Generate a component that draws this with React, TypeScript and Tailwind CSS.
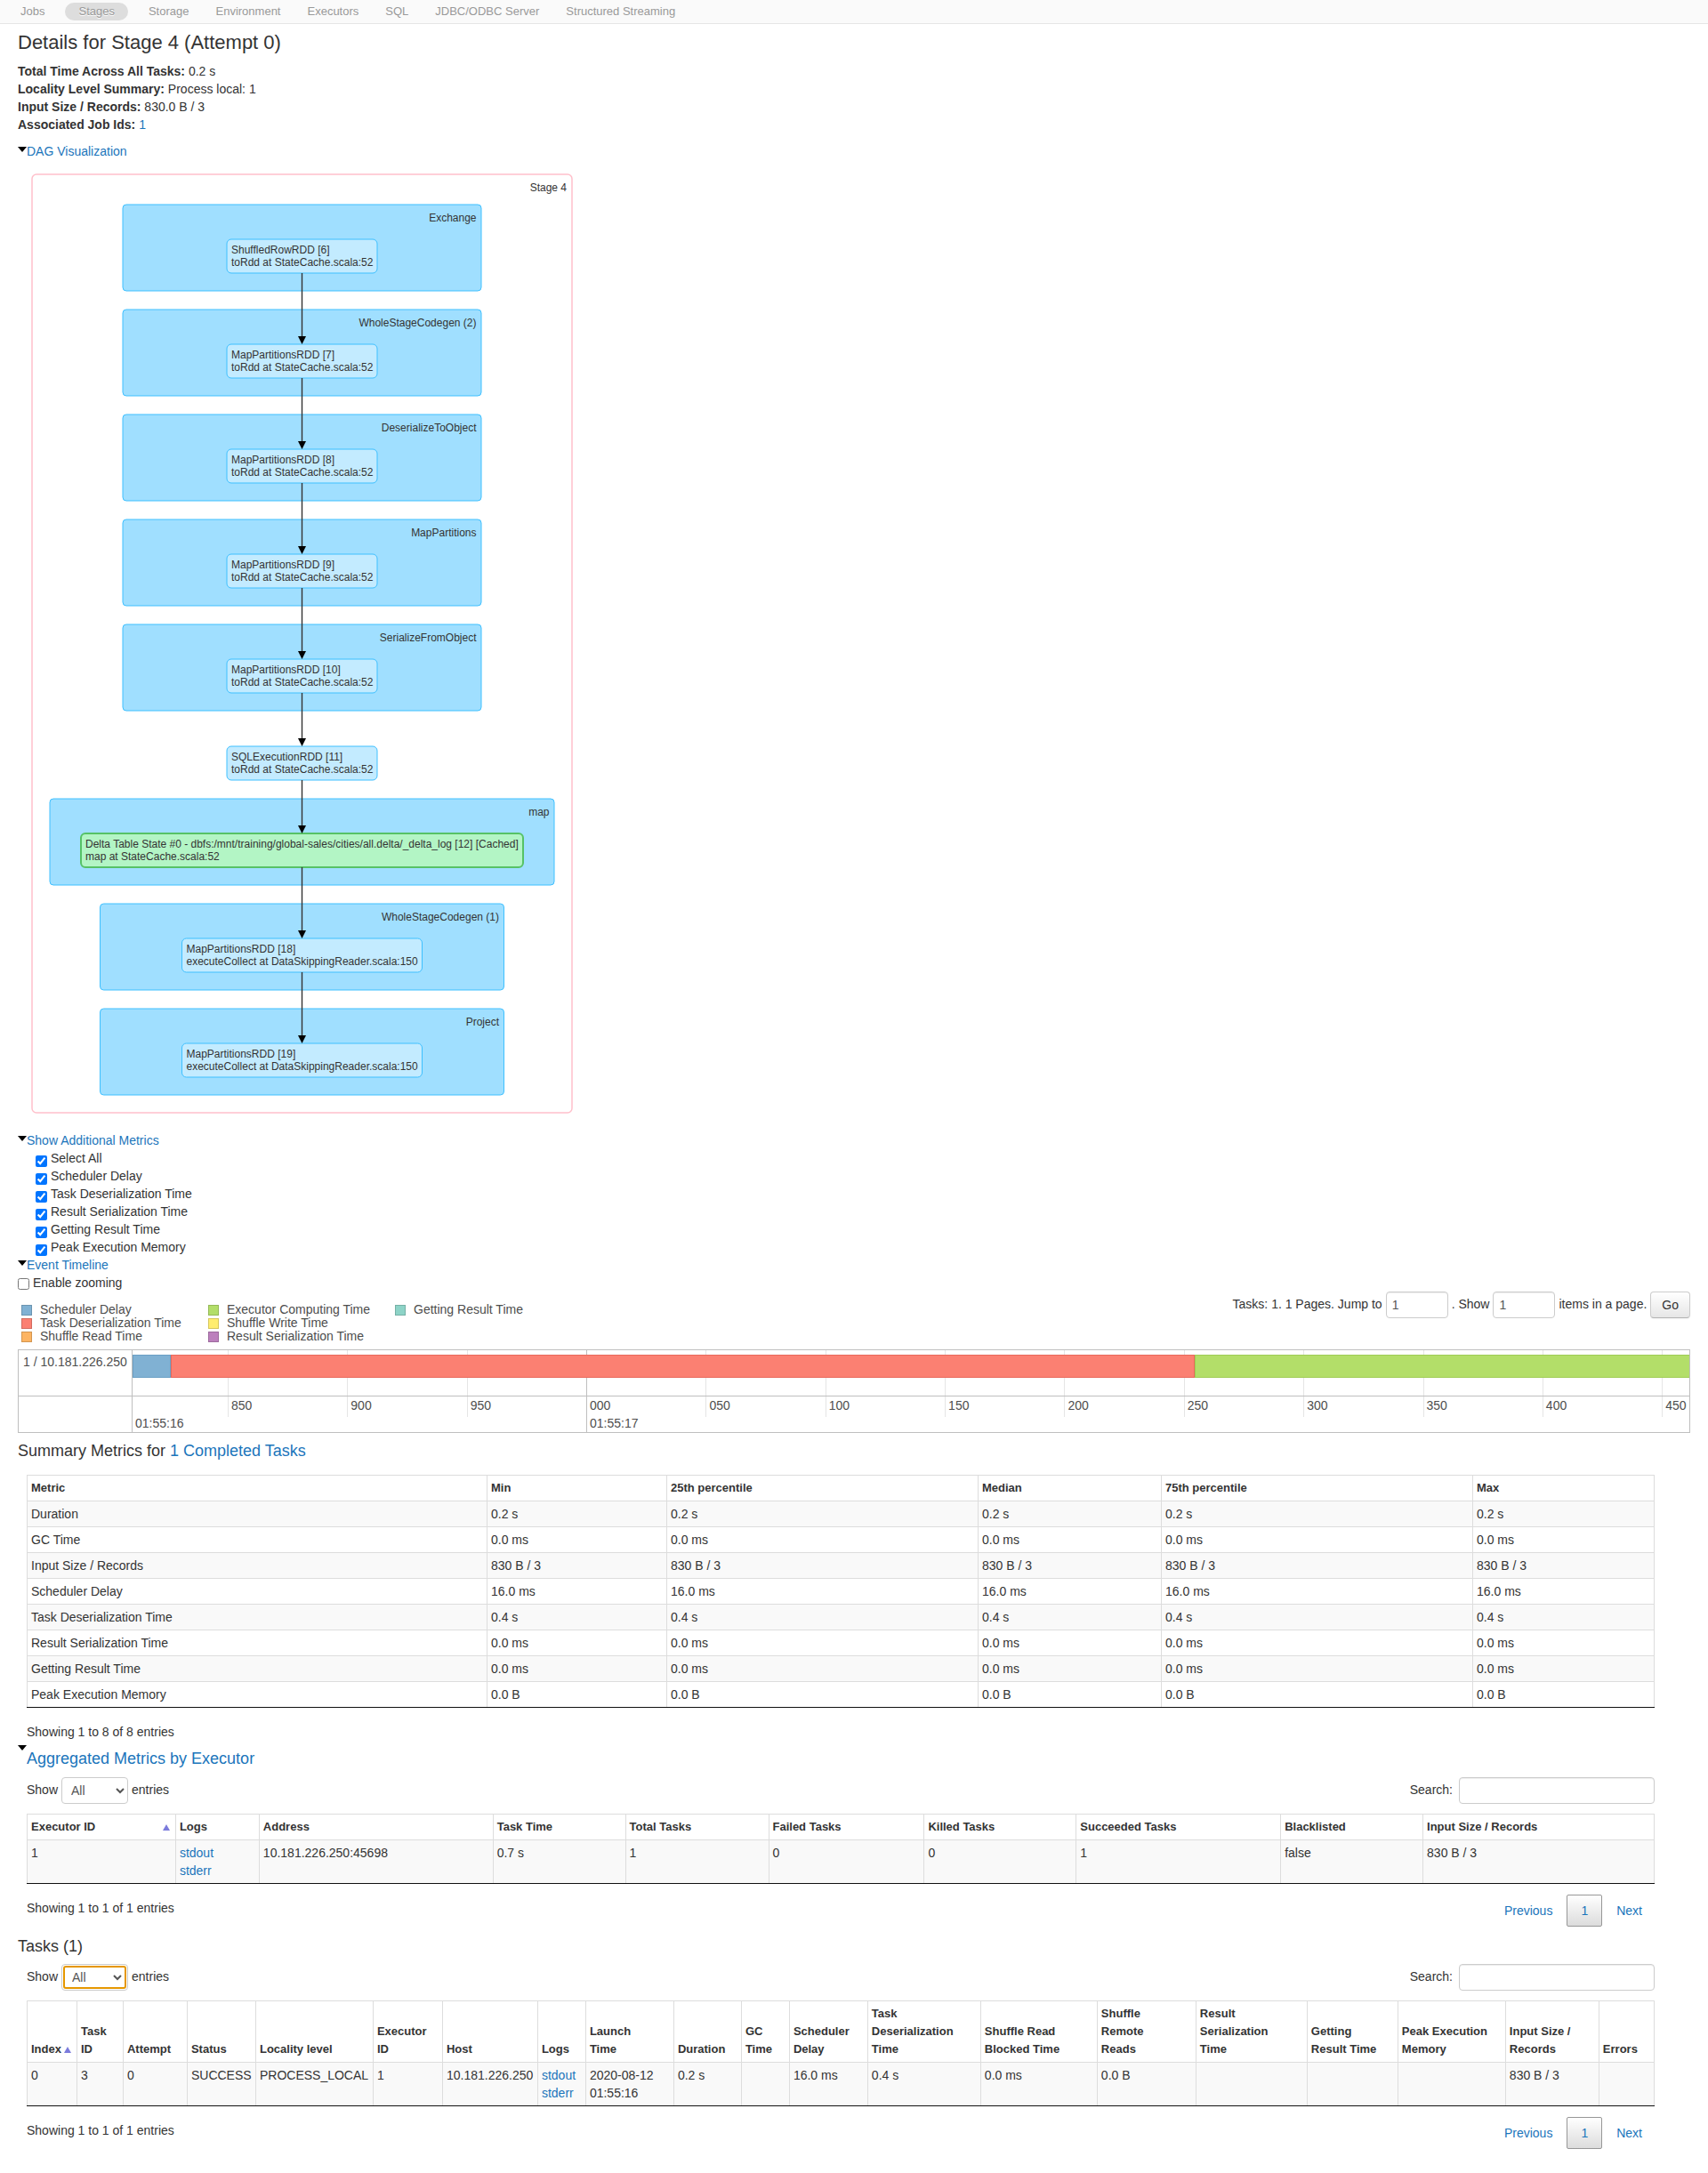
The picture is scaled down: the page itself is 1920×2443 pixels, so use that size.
import React from "react";

const tabs = ["Jobs", "Stages", "Storage", "Environment", "Executors", "SQL", "JDBC/ODBC Server", "Structured Streaming"];

const facts: { label: string; value: string; link?: boolean }[] = [
  { label: "Total Time Across All Tasks:", value: "0.2 s" },
  { label: "Locality Level Summary:", value: "Process local: 1" },
  { label: "Input Size / Records:", value: "830.0 B / 3" },
  { label: "Associated Job Ids:", value: "1", link: true },
];

const metricOptions = [
  "Select All",
  "Scheduler Delay",
  "Task Deserialization Time",
  "Result Serialization Time",
  "Getting Result Time",
  "Peak Execution Memory",
];

const link = "text-[#1b75bb] hover:underline";

function Caret() {
  return (
    <svg width="10" height="6" viewBox="0 0 10 6" className="block shrink-0" aria-hidden="true">
      <path d="M0 0H10L5 6Z" fill="#000" />
    </svg>
  );
}

function Toggle({ children }: { children: React.ReactNode }) {
  return (
    <button type="button" className="flex items-start leading-5 text-[#1b75bb]">
      <span className="mt-[5px]"><Caret /></span>
      {children}
    </button>
  );
}

/* ---------- DAG ---------- */

type Cluster = { name: string; x: number; right: number; y: number };
type Node = { title: string; site: string; x: number; right: number; y: number; cached?: boolean };

const clusters: Cluster[] = [
  { name: "Exchange", x: 138, right: 541, y: 230 },
  { name: "WholeStageCodegen (2)", x: 138, right: 541, y: 348 },
  { name: "DeserializeToObject", x: 138, right: 541, y: 466 },
  { name: "MapPartitions", x: 138, right: 541, y: 584 },
  { name: "SerializeFromObject", x: 138, right: 541, y: 702 },
  { name: "map", x: 56, right: 623, y: 898 },
  { name: "WholeStageCodegen (1)", x: 112.5, right: 566.5, y: 1016 },
  { name: "Project", x: 112.5, right: 566.5, y: 1134 },
];

const rdd = "toRdd at StateCache.scala:52";
const collect = "executeCollect at DataSkippingReader.scala:150";

const nodes: Node[] = [
  { title: "ShuffledRowRDD [6]", site: rdd, x: 255, right: 424, y: 269 },
  { title: "MapPartitionsRDD [7]", site: rdd, x: 255, right: 424, y: 387 },
  { title: "MapPartitionsRDD [8]", site: rdd, x: 255, right: 424, y: 505 },
  { title: "MapPartitionsRDD [9]", site: rdd, x: 255, right: 424, y: 623 },
  { title: "MapPartitionsRDD [10]", site: rdd, x: 255, right: 424, y: 741 },
  { title: "SQLExecutionRDD [11]", site: rdd, x: 255, right: 424, y: 839 },
  {
    title: "Delta Table State #0 - dbfs:/mnt/training/global-sales/cities/all.delta/_delta_log [12] [Cached]",
    site: "map at StateCache.scala:52",
    x: 91,
    right: 588,
    y: 937,
    cached: true,
  },
  { title: "MapPartitionsRDD [18]", site: collect, x: 204.5, right: 474.5, y: 1055 },
  { title: "MapPartitionsRDD [19]", site: collect, x: 204.5, right: 474.5, y: 1173 },
];

function Dag() {
  return (
    <svg width="640" height="1092" viewBox="20 180 640 1092" className="block text-xs" role="img" aria-label="DAG of stage 4">
      <rect x="36" y="196" width="607" height="1055" rx="5" fill="#fff" stroke="#ffc0cb" strokeWidth="1.5" />
      <text x="637" y="215" textAnchor="end" fill="#333">Stage 4</text>
      {clusters.map((c) => (
        <g key={c.name}>
          <rect x={c.x} y={c.y} width={c.right - c.x} height="97" rx="4" fill="#a0dfff" stroke="#3ec0ff" />
          <text x={c.right - 5.5} y={c.y + 19} textAnchor="end" fill="#333">{c.name}</text>
        </g>
      ))}
      {nodes.map((n) => (
        <g key={n.title}>
          <rect
            x={n.x}
            y={n.y}
            width={n.right - n.x}
            height="38"
            rx="5"
            fill={n.cached ? "#b3f5c5" : "#c3ebff"}
            stroke={n.cached ? "#56c266" : "#3ec0ff"}
            strokeWidth={n.cached ? 2 : 1}
          />
          <text x={n.x + 5} y={n.y + 16} fill="#333">{n.title}</text>
          <text x={n.x + 5} y={n.y + 30} fill="#333">{n.site}</text>
        </g>
      ))}
      {nodes.slice(1).map((n, i) => (
        <g key={n.title}>
          <path d={`M339.5 ${nodes[i].y + 38}V${n.y - 4}`} stroke="#333" strokeWidth="1.4" />
          <path d={`M335 ${n.y - 9}H344L339.5 ${n.y}Z`} fill="#000" />
        </g>
      ))}
    </svg>
  );
}

/* ---------- Event timeline ---------- */

const legend = [
  { name: "Scheduler Delay", color: "bg-[#80b1d3] border-[#6b94b0]" },
  { name: "Task Deserialization Time", color: "bg-[#fb8072] border-[#d26b5f]" },
  { name: "Shuffle Read Time", color: "bg-[#fdb462] border-[#d39651]" },
  { name: "Executor Computing Time", color: "bg-[#b3de69] border-[#95b957]" },
  { name: "Shuffle Write Time", color: "bg-[#ffed6f] border-[#d5c65c]" },
  { name: "Result Serialization Time", color: "bg-[#bc80bd] border-[#9d6b9e]" },
  { name: "Getting Result Time", color: "bg-[#8dd3c7] border-[#75b0a6]" },
];

const ticks = ["850", "900", "950", "000", "050", "100", "150", "200", "250", "300", "350", "400", "450"].map((label, i) => ({
  label,
  left: `${(((107 + i * 134.35) / 1750) * 100).toFixed(3)}%`,
  major: label === "000",
}));

function Timeline() {
  return (
    <div className="flex border border-[#bfbfbf] text-[#4d4d4d]">
      <div className="w-32 shrink-0 border-r border-[#bfbfbf]">
        <div className="h-[52px] border-b border-[#bfbfbf] px-[5px] pt-[3px] leading-5">1 / 10.181.226.250</div>
      </div>
      <div className="relative h-[92px] flex-1 overflow-hidden">
        {ticks.map((t) => (
          <div
            key={t.label}
            style={{ left: t.left }}
            className={
              t.major
                ? "absolute top-0 h-full border-l border-[#bfbfbf] pl-[3px] pt-[52px] leading-5"
                : "absolute top-0 h-[75px] border-l border-[#e5e5e5] pl-[3px] pt-[52px] leading-5"
            }
          >
            {t.label}
            {t.major && <div>01:55:17</div>}
          </div>
        ))}
        <div className="relative h-[52px] border-b border-[#bfbfbf] pt-[5px]">
          <div className="grid h-[26px] grid-cols-[43fr_1151fr_556fr]">
            <div className="border border-[#6b9fc4] bg-[#80b1d3]" />
            <div className="border border-[#e8695b] bg-[#fb8072]" />
            <div className="border-y border-l border-[#9fcc55] bg-[#b3de69]" />
          </div>
        </div>
        <div className="pl-[3px] pt-5 leading-5">01:55:16</div>
      </div>
    </div>
  );
}

const field =
  "h-[30px] rounded border border-[#ccc] bg-white px-1.5 text-sm text-[#555] shadow-[inset_0_1px_1px_rgba(0,0,0,0.075)]";

function TaskPager() {
  return (
    <form className="flex items-center leading-5" onSubmit={(e) => e.preventDefault()}>
      <label htmlFor="jump" className="pb-0.5">Tasks: 1. 1 Pages. Jump to</label>
      <input id="jump" defaultValue="1" className={`${field} ml-1 w-[70px]`} />
      <label htmlFor="per-page" className="ml-1 pb-0.5">. Show</label>
      <input id="per-page" defaultValue="1" aria-describedby="per-page-unit" className={`${field} ml-1 w-[70px]`} />
      <span id="per-page-unit" className="ml-1 pb-0.5">items in a page.</span>
      <button
        type="submit"
        className="ml-1 h-[30px] rounded border border-[#ccc] border-b-[#b3b3b3] bg-linear-to-b from-white to-[#e6e6e6] px-3 text-[#333] shadow-[0_1px_2px_rgba(0,0,0,0.05)]"
      >
        Go
      </button>
    </form>
  );
}

/* ---------- Tables ---------- */

type Column = { head: string; width: number; sorted?: boolean };

function DataTable({ columns, rows, label }: { columns: Column[]; rows: React.ReactNode[][]; label: string }) {
  const total = columns.reduce((sum, c) => sum + c.width, 0);
  return (
    <div className="border-b border-[#111]">
      <table
        aria-label={label}
        className="w-full table-fixed border-separate border-spacing-0 border-r border-[#ddd] leading-5"
      >
        <colgroup>
          {columns.map((c) => (
            <col key={c.head} style={{ width: `${(c.width / total) * 100}%` }} />
          ))}
        </colgroup>
        <thead>
          <tr>
            {columns.map((c) => (
              <th
                key={c.head}
                scope="col"
                className="whitespace-pre-line border-l border-t border-[#ddd] p-1 text-left align-bottom text-[13px] font-bold leading-5"
              >
                {c.sorted ? (
                  <span className="flex items-end justify-between">
                    {c.head}
                    <svg width="8" height="7" viewBox="0 0 8 7" className="mb-1.5 mr-0.5 shrink-0" aria-hidden="true">
                      <path d="M4 0L8 7H0Z" fill="#7b7bdc" />
                    </svg>
                  </span>
                ) : (
                  c.head
                )}
              </th>
            ))}
          </tr>
        </thead>
        <tbody>
          {rows.map((r, i) => (
            <tr key={i} className="odd:bg-[#f9f9f9]">
              {r.map((cell, j) => (
                <td key={j} className="border-l border-t border-[#ddd] p-1 align-top">{cell}</td>
              ))}
            </tr>
          ))}
        </tbody>
      </table>
    </div>
  );
}

const logs = (
  <>
    <a href="#stdout" className={`block ${link}`}>stdout</a>
    <a href="#stderr" className={`block ${link}`}>stderr</a>
  </>
);

const summaryColumns: Column[] = [
  { head: "Metric", width: 517 },
  { head: "Min", width: 202 },
  { head: "25th percentile", width: 350 },
  { head: "Median", width: 206 },
  { head: "75th percentile", width: 350 },
  { head: "Max", width: 204 },
];

const summaryRows = [
  ["Duration", "0.2 s"],
  ["GC Time", "0.0 ms"],
  ["Input Size / Records", "830 B / 3"],
  ["Scheduler Delay", "16.0 ms"],
  ["Task Deserialization Time", "0.4 s"],
  ["Result Serialization Time", "0.0 ms"],
  ["Getting Result Time", "0.0 ms"],
  ["Peak Execution Memory", "0.0 B"],
].map(([name, v]) => [name, v, v, v, v, v]);

const executorColumns: Column[] = [
  { head: "Executor ID", width: 167, sorted: true },
  { head: "Logs", width: 94 },
  { head: "Address", width: 263 },
  { head: "Task Time", width: 149 },
  { head: "Total Tasks", width: 161 },
  { head: "Failed Tasks", width: 175 },
  { head: "Killed Tasks", width: 171 },
  { head: "Succeeded Tasks", width: 230 },
  { head: "Blacklisted", width: 160 },
  { head: "Input Size / Records", width: 260 },
];

const executorRows = [["1", logs, "10.181.226.250:45698", "0.7 s", "1", "0", "0", "1", "false", "830 B / 3"]];

const taskColumns: Column[] = [
  { head: "Index", width: 56, sorted: true },
  { head: "Task\nID", width: 52 },
  { head: "Attempt", width: 72 },
  { head: "Status", width: 77 },
  { head: "Locality level", width: 132 },
  { head: "Executor\nID", width: 78 },
  { head: "Host", width: 107 },
  { head: "Logs", width: 54 },
  { head: "Launch\nTime", width: 99 },
  { head: "Duration", width: 76 },
  { head: "GC\nTime", width: 54 },
  { head: "Scheduler\nDelay", width: 88 },
  { head: "Task\nDeserialization\nTime", width: 127 },
  { head: "Shuffle Read\nBlocked Time", width: 131 },
  { head: "Shuffle\nRemote\nReads", width: 111 },
  { head: "Result\nSerialization\nTime", width: 125 },
  { head: "Getting\nResult Time", width: 102 },
  { head: "Peak Execution\nMemory", width: 121 },
  { head: "Input Size /\nRecords", width: 105 },
  { head: "Errors", width: 62 },
];

const taskRows = [
  [
    "0", "3", "0", "SUCCESS", "PROCESS_LOCAL", "1", "10.181.226.250", logs, "2020-08-12 01:55:16", "0.2 s",
    "", "16.0 ms", "0.4 s", "0.0 ms", "0.0 B", "", "", "", "830 B / 3", "",
  ],
];

function TableControls({ id, focused }: { id: string; focused?: boolean }) {
  return (
    <div className="mb-[11px] flex items-start justify-between">
      <div className="flex items-start">
        <label htmlFor={`${id}-length`} className="pt-1 leading-5">Show</label>
        <span className={focused ? "mx-1 rounded border border-[#ccc] p-px" : "mx-1"}>
          <select
            id={`${id}-length`}
            className={
              focused
                ? "block h-[26px] w-[71px] rounded-[3px] border-2 border-[#e59700] bg-white pl-1 text-sm text-[#555] outline-none"
                : "block h-[30px] w-[75px] rounded border border-[#ccc] bg-white px-1.5 text-sm text-[#555]"
            }
          >
            <option>All</option>
          </select>
        </span>
        <span className="pt-1 leading-5">entries</span>
      </div>
      <div className="flex items-start">
        <label htmlFor={`${id}-search`} className="pt-1 leading-5">Search:</label>
        <input id={`${id}-search`} type="search" className={`${field} ml-[7px] w-[220px]`} />
      </div>
    </div>
  );
}

function TableFooter() {
  return (
    <div className="mt-3 flex items-start justify-between">
      <div className="pt-[5px] leading-5">Showing 1 to 1 of 1 entries</div>
      <nav aria-label="Table pages" className="flex items-center gap-0.5 leading-5 text-[#1b75bb]">
        <button type="button" className="h-9 px-3.5">Previous</button>
        <button type="button" aria-current="page" className="h-9 rounded-xs border border-[#979797] bg-linear-to-b from-white to-[#dcdcdc] px-[15px]">1</button>
        <button type="button" className="h-9 px-3.5">Next</button>
      </nav>
    </div>
  );
}

export default function App() {
  return (
    <div className="min-h-screen bg-white pb-[27px] font-['Liberation_Sans',Arial,sans-serif] text-sm text-[#333]">
      <nav className="flex h-[27px] items-center border-b border-[#e5e5e5] bg-[#fafafa] pl-2 text-[13px] leading-5 text-[#999]">
        {tabs.map((t) =>
          t === "Stages" ? (
            <a key={t} href="#stages" aria-current="page" className="mx-2 rounded-full bg-[#ddd] px-[15px] [text-shadow:0_1px_0_#fff]">{t}</a>
          ) : (
            <a key={t} href="#tab" className="px-[15px]">{t}</a>
          ),
        )}
      </nav>

      <main className="px-5">
        <h1 className="mb-0.5 mt-px text-[22px] leading-10">Details for Stage 4 (Attempt 0)</h1>
        <ul className="mb-2.5 leading-5">
          {facts.map((f) => (
            <li key={f.label}>
              <strong className="font-bold">{f.label}</strong>{" "}
              {f.link ? <a href="#job" className={link}>{f.value}</a> : f.value}
            </li>
          ))}
        </ul>

        <Toggle>DAG Visualization</Toggle>
        <Dag />

        <Toggle>Show Additional Metrics</Toggle>
        <ul className="pl-5 leading-5">
          {metricOptions.map((m) => (
            <li key={m} className="h-5">
              <label className="inline-flex items-start gap-1">
                <input type="checkbox" defaultChecked className="mt-[7px] size-[13px]" />
                {m}
              </label>
            </li>
          ))}
        </ul>

        <Toggle>Event Timeline</Toggle>
        <label className="flex h-5 items-start gap-1 leading-5">
          <input type="checkbox" className="mt-[5px] size-[13px]" />
          Enable zooming
        </label>

        <div className="flex items-start justify-between">
          <ul className="mb-[7px] mt-[13px] grid auto-cols-[210px] grid-flow-col grid-rows-3 pl-1 leading-[15px] text-[#4d4d4d]">
            {legend.map((l) => (
              <li key={l.name} className="flex items-center gap-2 whitespace-nowrap">
                <span className={`mr-px size-3 shrink-0 border ${l.color}`} />
                {l.name}
              </li>
            ))}
          </ul>
          <TaskPager />
        </div>

        <Timeline />

        <h2 className="mb-[7px] text-lg leading-10">
          Summary Metrics for <a href="#tasks" className={link}>1 Completed Tasks</a>
        </h2>
        <section className="ml-2.5 mr-10">
          <DataTable label="Summary metrics" columns={summaryColumns} rows={summaryRows} />
          <div className="mt-[17px] leading-5">Showing 1 to 8 of 8 entries</div>
        </section>

        <h2 className="mb-[11px]">
          <button type="button" className="flex items-start text-lg leading-5 text-[#1b75bb]">
            <span className="mt-[5px]"><Caret /></span>
            <span className="pt-2.5">Aggregated Metrics by Executor</span>
          </button>
        </h2>
        <section className="ml-2.5 mr-10">
          <TableControls id="executors" />
          <DataTable label="Aggregated metrics by executor" columns={executorColumns} rows={executorRows} />
          <TableFooter />
        </section>

        <h2 id="tasks" className="mt-0.5 text-lg leading-10">Tasks (1)</h2>
        <section className="ml-2.5 mr-10">
          <TableControls id="tasks" focused />
          <DataTable label="Tasks" columns={taskColumns} rows={taskRows} />
          <TableFooter />
        </section>
      </main>
    </div>
  );
}
